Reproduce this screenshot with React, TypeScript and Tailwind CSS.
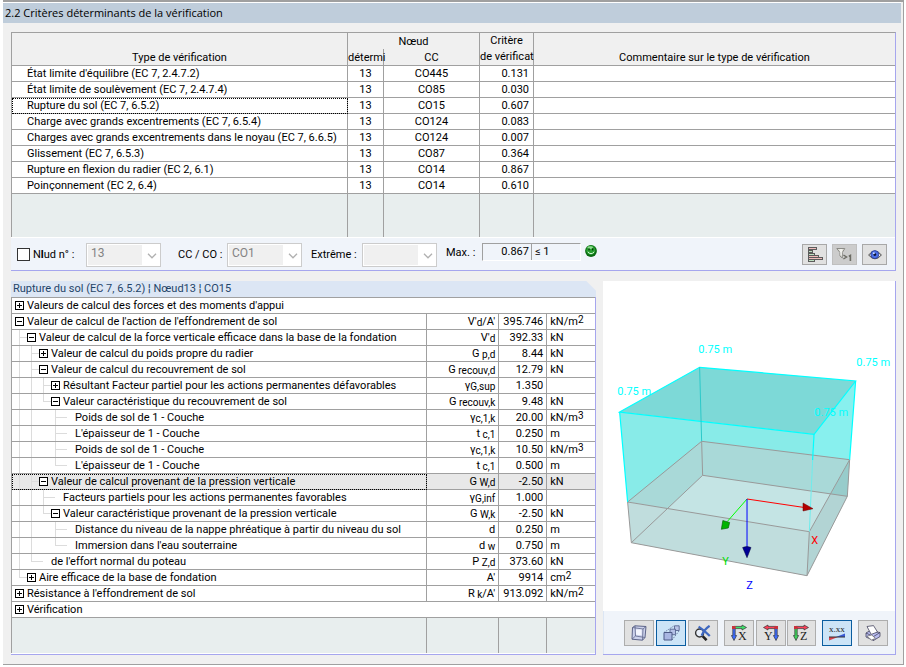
import type { ReactNode } from 'react';
import clsx from 'clsx';

const checks = [
    { label: "État limite d'équilibre (EC 7, 2.4.7.2)", node: '13', co: 'CO445', value: '0.131' },
    { label: 'État limite de soulèvement (EC 7, 2.4.7.4)', node: '13', co: 'CO85', value: '0.030' },
    { label: 'Rupture du sol (EC 7, 6.5.2)', node: '13', co: 'CO15', value: '0.607', focused: true },
    { label: 'Charge avec grands excentrements (EC 7, 6.5.4)', node: '13', co: 'CO124', value: '0.083' },
    { label: 'Charges avec grands excentrements dans le noyau (EC 7, 6.6.5)', node: '13', co: 'CO124', value: '0.007' },
    { label: 'Glissement (EC 7, 6.5.3)', node: '13', co: 'CO87', value: '0.364' },
    { label: 'Rupture en flexion du radier (EC 2, 6.1)', node: '13', co: 'CO14', value: '0.867' },
    { label: 'Poinçonnement (EC 2, 6.4)', node: '13', co: 'CO14', value: '0.610' }
];

type DetailRow = {
    // one character per indentation level: | pass through, T branch, L last branch
    guides: string;
    box?: '+' | '-';
    label: string;
    symbol?: ReactNode;
    value?: string;
    unit?: ReactNode;
    focused?: boolean;
};

const Sub = ({ children }: { children: ReactNode }) => (
    <span className="relative top-px text-[10px]">{children}</span>
);

const Sup = ({ children }: { children: ReactNode }) => (
    <span className="relative -top-[2px] text-[10px]">{children}</span>
);

const details: DetailRow[] = [
    { guides: '', box: '+', label: "Valeurs de calcul des forces et des moments d'appui" },
    { guides: '', box: '-', label: "Valeur de calcul de l'action de l'effondrement de sol", symbol: <>V'<Sub>d</Sub>/A'</>, value: '395.746', unit: <>kN/m<Sup>2</Sup></> },
    { guides: 'T', box: '-', label: 'Valeur de calcul de la force verticale efficace dans la base de la fondation', symbol: <>V'<Sub>d</Sub></>, value: '392.33', unit: 'kN' },
    { guides: '|T', box: '+', label: 'Valeur de calcul du poids propre du radier', symbol: <>G<Sub> p,d</Sub></>, value: '8.44', unit: 'kN' },
    { guides: '|T', box: '-', label: 'Valeur de calcul du recouvrement de sol', symbol: <>G<Sub> recouv,d</Sub></>, value: '12.79', unit: 'kN' },
    { guides: '||T', box: '+', label: 'Résultant Facteur partiel pour les actions permanentes défavorables', symbol: <>γ<Sub>G,sup</Sub></>, value: '1.350' },
    { guides: '||L', box: '-', label: 'Valeur caractéristique du recouvrement de sol', symbol: <>G<Sub> recouv,k</Sub></>, value: '9.48', unit: 'kN' },
    { guides: '|| T', label: 'Poids de sol de 1 - Couche', symbol: <>γ<Sub>c,1,k</Sub></>, value: '20.00', unit: <>kN/m<Sup>3</Sup></> },
    { guides: '|| T', label: "L'épaisseur de 1 - Couche", symbol: <>t<Sub> c,1</Sub></>, value: '0.250', unit: 'm' },
    { guides: '|| T', label: 'Poids de sol de 1 - Couche', symbol: <>γ<Sub>c,1,k</Sub></>, value: '10.50', unit: <>kN/m<Sup>3</Sup></> },
    { guides: '|| L', label: "L'épaisseur de 1 - Couche", symbol: <>t<Sub> c,1</Sub></>, value: '0.500', unit: 'm' },
    { guides: '|T', box: '-', label: 'Valeur de calcul provenant de la pression verticale', symbol: <>G<Sub> W,d</Sub></>, value: '-2.50', unit: 'kN', focused: true },
    { guides: '||T', label: 'Facteurs partiels pour les actions permanentes favorables', symbol: <>γ<Sub>G,inf</Sub></>, value: '1.000' },
    { guides: '||L', box: '-', label: 'Valeur caractéristique provenant de la pression verticale', symbol: <>G<Sub> W,k</Sub></>, value: '-2.50', unit: 'kN' },
    { guides: '|| T', label: 'Distance du niveau de la nappe phréatique à partir du niveau du sol', symbol: 'd', value: '0.250', unit: 'm' },
    { guides: '|| L', label: "Immersion dans l'eau souterraine", symbol: <>d<Sub> w</Sub></>, value: '0.750', unit: 'm' },
    { guides: '|L', label: "de l'effort normal du poteau", symbol: <>P<Sub> Z,d</Sub></>, value: '373.60', unit: 'kN' },
    { guides: 'L', box: '+', label: 'Aire efficace de la base de fondation', symbol: "A'", value: '9914', unit: <>cm<Sup>2</Sup></> },
    { guides: '', box: '+', label: "Résistance à l'effondrement de sol", symbol: <>R<Sub> k</Sub>/A'</>, value: '913.092', unit: <>kN/m<Sup>2</Sup></> },
    { guides: '', box: '+', label: 'Vérification' }
];

const cell = 'h-4 border-b border-[#a0a0a0] p-0 whitespace-nowrap';
const ruled = 'border-r border-[#a0a0a0]';

const ChecksTable = () => (
    <table className="w-full table-fixed border-separate border-spacing-0 border-l border-[#a0a0a0] bg-white">
        <colgroup>
            <col className="w-[336px]" />
            <col className="w-9" />
            <col className="w-24" />
            <col className="w-[54px]" />
            <col />
        </colgroup>
        <thead className="bg-[#f0f0f0]">
            <tr>
                <th rowSpan={2} className={clsx(cell, ruled, 'align-bottom font-normal')}>
                    Type de vérification
                </th>
                <th colSpan={2} className={clsx('h-4 p-0 font-normal', ruled)}>
                    Nœud
                </th>
                <th rowSpan={2} className={clsx(cell, ruled, 'align-bottom font-normal leading-4')}>
                    Critère
                    <br />
                    de vérificat
                </th>
                <th rowSpan={2} className={clsx(cell, 'align-bottom font-normal')}>
                    Commentaire sur le type de vérification
                </th>
            </tr>
            <tr>
                <th className={clsx('h-[17px] border-b p-0 font-normal', ruled)}>détermi</th>
                <th className={clsx('h-[17px] border-b p-0 font-normal', ruled)}>CC</th>
            </tr>
        </thead>
        <tbody>
            {checks.map((check) => (
                <tr key={check.label}>
                    <td
                        className={clsx(
                            cell,
                            ruled,
                            'pl-[15px]',
                            check.focused &&
                                'outline-1 -outline-offset-1 outline-black outline-dotted'
                        )}
                    >
                        {check.label}
                    </td>
                    <td className={clsx(cell, ruled, 'text-center')}>{check.node}</td>
                    <td className={clsx(cell, ruled, 'text-center')}>{check.co}</td>
                    <td className={clsx(cell, ruled, 'pr-1 text-right')}>{check.value}</td>
                    <td className={cell} />
                </tr>
            ))}
            <tr className="h-[43px] bg-[#e8eeee]">
                <td className={ruled} />
                <td className={ruled} />
                <td className={ruled} />
                <td className={ruled} />
                <td />
            </tr>
        </tbody>
    </table>
);

const Combo = ({ id, value }: { id: string; value: string }) => (
    <div className="relative h-6 w-[75px] border border-[#cccccc] bg-white p-px">
        <select
            id={id}
            disabled
            defaultValue={value}
            className="block h-5 w-[54px] appearance-none bg-[#f0f0f0] pb-1 pl-[3px] text-[12px] leading-4 text-[#838383] opacity-100"
        >
            <option>{value}</option>
        </select>
        <svg
            className="pointer-events-none absolute top-[9px] right-[3px] h-[6px] w-[10px]"
            viewBox="0 0 10 6"
            fill="none"
            stroke="#b0b0b0"
            strokeWidth="1.3"
        >
            <path d="M1 .8 5 4.8 9 .8" />
        </svg>
    </div>
);

const Smiley = () => (
    <svg className="size-3" viewBox="0 0 12 12">
        <circle cx="6" cy="6" r="5.9" fill="#0b6a12" />
        <circle cx="5.8" cy="5.2" r="4.6" fill="#27a02f" />
        <ellipse cx="5.2" cy="2.6" rx="2.8" ry="1.4" fill="#8fdc90" />
        <rect x="3.4" y="3.4" width="1.3" height="2" fill="#06330a" />
        <rect x="7" y="3.4" width="1.3" height="2" fill="#06330a" />
        <path d="M2.8 6.8Q6 10.6 9.2 6.8" fill="none" stroke="#dcf7dc" strokeWidth="1" />
    </svg>
);

const BarsIcon = () => (
    <svg className="size-4" viewBox="0 0 16 16" shapeRendering="crispEdges">
        <path d="M1 0h9v3H1zM1 3h5v3H1zM1 6h7v3H1zM1 8h11v3H1zM1 10h15v3H1zM1 12h7v3H1z" fill="#5c5c5c" />
        <path d="M2 1h7v1H2zM2 9h9v1H2zM2 11h13v1H2z" fill="#eebcbc" />
        <path d="M2 4h3v1H2zM2 7h5v1H2zM2 13h5v1H2z" fill="#bfe0c2" />
        <path d="M7 3h3v3H7z" fill="#e1e1e1" />
    </svg>
);

const FilterIcon = () => (
    <svg className="h-4 w-[17px]" viewBox="0 0 17 16">
        <path d="M.8 1.5h8L6.3 5.5v5.5L4 9V5.5z" fill="#e4e4de" stroke="#8b8b86" />
        <path d="M5 2v6.5" stroke="#fff" />
        <path d="M7.4 8 10.6 10l-3.2 2" fill="none" stroke="#6b6b64" strokeWidth="1.4" />
        <path d="M12.8 9.4l1.6-1v5.6" fill="none" stroke="#6b6b64" strokeWidth="1.6" />
    </svg>
);

const EyeIcon = () => (
    <svg className="h-3 w-[14px]" viewBox="0 0 14 12">
        <path d="M.6 6Q7-1.8 13.4 6 7 13.6.6 6z" fill="#f5f5f5" stroke="#444" strokeWidth="1" />
        <circle cx="6.8" cy="5.6" r="4" fill="#4c6fe6" stroke="#26398f" strokeWidth=".8" />
        <circle cx="6.8" cy="5.6" r="1.4" fill="#0a1030" />
        <circle cx="5.8" cy="4.2" r="1" fill="#c9dcff" />
    </svg>
);

const FilterBar = () => (
    <div className="flex h-[33px] items-start border-t border-white bg-[#f0f4fa] pr-2 pl-[6px]">
        <label className="mt-[9px] flex h-[15px] w-[59px] items-center gap-[3px] whitespace-nowrap">
            <input
                type="checkbox"
                className="m-0 size-[13px] appearance-none border border-[#333] bg-white checked:bg-[#333]"
            />
            <span>
                N<b>l</b>ud n° :
            </span>
        </label>
        <div className="ml-[10px] pt-[5px]">
            <Combo id="node" value="13" />
        </div>
        <label htmlFor="co" className="mt-[9px] ml-[17px] w-[49px] whitespace-nowrap">
            CC / CO :
        </label>
        <div className="pt-[5px]">
            <Combo id="co" value="CO1" />
        </div>
        <label htmlFor="extreme" className="mt-[9px] ml-[9px] w-[51px] whitespace-nowrap">
            Extrême :
        </label>
        <div className="pt-[5px]">
            <Combo id="extreme" value="" />
        </div>
        <span className="mt-[7px] ml-[9px] w-9 whitespace-nowrap">Max. :</span>
        <div className="mt-[5px] flex h-[18px] w-[99px] border border-t-[#a0a0a0] border-r-white border-b-white border-l-[#a0a0a0] leading-4">
            <span className="w-[49px] border-r border-[#a0a0a0] pr-[2px] text-right">0.867</span>
            <span className="pl-[3px]">≤ 1</span>
        </div>
        <div className="mt-[7px] ml-1">
            <Smiley />
        </div>
        <div className="mt-[6px] ml-auto flex gap-[5px]">
            <button type="button" aria-label="Diagramme" className="grid h-[21px] w-[25px] place-items-center border border-[#a8a8a8] bg-[#e1e1e1]">
                <BarsIcon />
            </button>
            <button type="button" aria-label="Filtrer" disabled className="grid h-[21px] w-[25px] place-items-center border border-[#bfbfbf] bg-[#cccccc]">
                <FilterIcon />
            </button>
            <button type="button" aria-label="Afficher" className="grid h-[21px] w-[25px] place-items-center border border-[#a8a8a8] bg-[#e1e1e1]">
                <EyeIcon />
            </button>
        </div>
    </div>
);

const Guide = ({ kind }: { kind: string }) => (
    <span className="flex h-[15px] w-3 shrink-0 pl-[7px]">
        {kind !== ' ' && (
            <span className={clsx('w-px bg-[#dcdcdc]', kind === 'L' ? 'h-2' : 'h-[15px]')} />
        )}
        {(kind === 'T' || kind === 'L') && <span className="mt-[7px] h-px w-1 bg-[#dcdcdc]" />}
    </span>
);

const TreeLabel = ({ row }: { row: DetailRow }) => (
    <div className="flex h-[15px] items-center">
        {[...row.guides].map((kind, i) => (
            <Guide key={i} kind={kind} />
        ))}
        <span className="mr-[3px] flex w-3 shrink-0 items-center">
            {row.box ? (
                <>
                    <span className={clsx('h-px w-[3px]', row.guides && 'bg-[#dcdcdc]')} />
                    <button
                        type="button"
                        aria-expanded={row.box === '-'}
                        aria-label={row.label}
                        className="block size-[9px]"
                    >
                        <svg className="block size-[9px]" viewBox="0 0 9 9" shapeRendering="crispEdges">
                            <path d="M.5.5h8v8h-8z" fill="#fff" stroke="#000" />
                            <path d={row.box === '+' ? 'M2 4.5h5M4.5 2v5' : 'M2 4.5h5'} stroke="#000" />
                        </svg>
                    </button>
                </>
            ) : (
                <span className="h-px w-[7px] bg-[#dcdcdc]" />
            )}
        </span>
        <span>{row.label}</span>
    </div>
);

const DetailsPanel = () => (
    <section className="flex min-w-0 flex-col border-b border-[#a6a6ee]">
        <h2 className="h-4 bg-[#dce6f4] pl-[2px] leading-4 text-[#1f4468] [clip-path:polygon(0_0,calc(100%-10px)_0,100%_10px,100%_100%,0_100%)]">
            Rupture du sol (EC 7, 6.5.2) ¦ Nœud13 ¦ CO15
        </h2>
        <div className="border-r border-[#a6a6ee] bg-white pb-px">
            <table className="w-full table-fixed border-separate border-spacing-0 border-t border-l border-[#a0a0a0]">
                <colgroup>
                    <col />
                    <col className="w-[72px]" />
                    <col className="w-12" />
                    <col className="w-12" />
                </colgroup>
                <tbody>
                    {details.map((row, i) =>
                        row.symbol ? (
                            <tr key={i} className={row.focused ? 'bg-[#e8e8e8]' : undefined}>
                                <td
                                    className={clsx(
                                        cell,
                                        ruled,
                                        row.focused &&
                                            'outline-1 -outline-offset-1 outline-black outline-dotted'
                                    )}
                                >
                                    <TreeLabel row={row} />
                                </td>
                                <td className={clsx(cell, ruled, 'pr-[3px] text-right')}>
                                    <div className="h-[15px]">{row.symbol}</div>
                                </td>
                                <td className={clsx(cell, ruled, 'pr-[3px] text-right')}>{row.value}</td>
                                <td className={clsx(cell, 'pl-[3px]')}>
                                    <div className="h-[15px]">{row.unit}</div>
                                </td>
                            </tr>
                        ) : (
                            <tr key={i}>
                                <td colSpan={4} className={cell}>
                                    <TreeLabel row={row} />
                                </td>
                            </tr>
                        )
                    )}
                    <tr className="h-[35px] bg-[#e8eeee]">
                        <td className={ruled} />
                        <td className={ruled} />
                        <td className={ruled} />
                        <td />
                    </tr>
                </tbody>
            </table>
        </div>
    </section>
);

// Footing block with the soil cover above it, in perspective
const Scene = () => (
    <svg className="block h-[330px] w-full bg-white" viewBox="603 281 291 330">
        <path d="M619.3 412 813.7 434.3 809 531.7 627.3 502z" fill="#88ebe8" />
        <path d="M813.7 434.3 855.3 381 849.3 459.7 809 531.7z" fill="#88f0ee" />
        <path d="M619.3 412 699.3 367.3 855.3 381 813.7 434.3z" fill="#7dd9d7" />
        <path d="M627.3 502 701.3 441.3 849.3 459.7 809 531.7z" fill="#a9d9d8" />
        <path d="M631 542.7 702.3 475.3 847 496.3 806.7 575.7z" fill="#c4e4e4" />
        <path d="M627.3 502 809 531.7 806.7 575.7 631 542.7z" fill="#c0dddd" />
        <path d="M809 531.7 849.3 459.7 847 496.3 806.7 575.7z" fill="#b2d4d4" />
        <path d="M849.3 459.7 847 496.3 830.5 494z" fill="#97cccb" />
        <g fill="none" stroke="#999" strokeWidth="1">
            <path d="M627.3 502 701.3 441.3 849.3 459.7 809 531.7z" />
            <path d="M631 542.7 702.3 475.3 847 496.3 806.7 575.7z" />
            <path d="M627.3 502 631 542.7M701.3 441.3 702.3 475.3M849.3 459.7 847 496.3M809 531.7 806.7 575.7" />
        </g>
        <g fill="none" stroke="#00ffff" strokeWidth="1.2">
            <path d="M619.3 412 699.3 367.3 855.3 381 813.7 434.3z" />
            <path d="M619.3 412 627.3 502M855.3 381 849.3 459.7" />
            <path d="M813.7 434.3 812.3 460" />
        </g>
        <path d="M699.3 367.3 701.3 441.3" stroke="#2cc9c9" />
        <path d="M812.3 460 809 531.7" stroke="#6eecec" />
        <path d="M746.7 499 804 507.5" stroke="#ff0000" />
        <path d="M802.7 503 812.7 508.7 802.7 511z" fill="#b40000" stroke="#600" strokeWidth=".5" />
        <path d="M746.7 499 727 521.5" stroke="#00ff00" />
        <path d="M722.5 520.5 729.3 522.5 728 528 721 529.3z" fill="#00b400" stroke="#050" strokeWidth=".6" />
        <path d="M746.7 499v49" stroke="#0000ff" />
        <path d="M742.3 547.5Q746.7 545.5 750.7 547.5L746.7 557.7z" fill="#000096" stroke="#003" strokeWidth=".5" />
        <g fill="#00ffff" fontSize="11">
            <text x="698" y="353">0.75 m</text>
            <text x="856" y="366">0.75 m</text>
            <text x="617" y="395">0.75 m</text>
            <text x="814" y="416">0.75 m</text>
        </g>
        <g fontSize="11">
            <text x="811" y="544" fill="#ff0000">X</text>
            <text x="722" y="565" fill="#00dd00">Y</text>
            <text x="746" y="589" fill="#0000ff">Z</text>
        </g>
    </svg>
);

const ToolButton = ({
    active,
    children,
    className,
    label
}: {
    active?: boolean;
    children: ReactNode;
    className?: string;
    label: string;
}) => (
    <button
        type="button"
        aria-label={label}
        aria-pressed={active}
        className={clsx(
            'grid h-[26px] w-[30px] place-items-center border',
            active ? 'border-[#0a5da0] bg-[#cce4f7]' : 'border-[#adadad] bg-[#e1e1e1]',
            className
        )}
    >
        {children}
    </button>
);

// Two coloured axis arrows with the name of the view axis
const AxisIcon = ({
    axis,
    across,
    down,
    flip
}: {
    axis: string;
    across: string;
    down: string;
    flip?: boolean;
}) => (
    <svg className="h-[18px] w-4" viewBox="0 0 16 18">
        <g transform={flip ? 'matrix(-1 0 0 1 16 0)' : undefined}>
            <path d="M3 2.4h8V1l4.5 2.5L11 6V4.6H3z" fill={across} stroke="#333" strokeWidth=".7" />
            <path d="M1.8 4h2.4v7.5h1.4L3 16.5.4 11.5h1.4z" fill={down} stroke="#333" strokeWidth=".7" />
            <rect x="1" y="2" width="3.6" height="3" fill="#c8323c" />
        </g>
        <text
            x={flip ? 1 : 7}
            y="16"
            fontSize="12"
            fill="#222"
            fontFamily="'Liberation Serif', serif"
        >
            {axis}
        </text>
    </svg>
);

const ViewBar = () => (
    <div className="flex h-[43px] items-start justify-end border-l border-[#dce6f4] bg-[#f0f4fa] pt-[9px] pr-[7px] pl-5">
        <ToolButton label="Vue isométrique">
            <svg className="size-4" viewBox="0 0 16 16" fill="none" stroke="#5d6488">
                <path d="M1.5 2.5 4 .8l11 .7-1 11-2.5 2.7-10.5-1z" fill="#ccd2ec" />
                <path d="M1.5 2.5 12 4l-.5 11.2M12 4l3-2.5M4 .8 4.5 11l9.5 1.5M4.5 11 1 14.2" strokeWidth=".8" />
                <path d="M5 4.6h5.6v5.6L5 9.8z" fill="#f3f5fd" stroke="none" />
            </svg>
        </ToolButton>
        <ToolButton label="Perspective" active className="ml-[2px] w-[29px]">
            <svg className="h-4 w-[17px]" viewBox="0 0 17 16" stroke="#4d5a86">
                <path d="M1 7.5 11 .8M9 15l7-9M9 7.5l7-6.7" strokeWidth=".7" strokeDasharray="1.5 1" />
                <path d="M11.5 .8h4.7v4.7h-4.7z" fill="#b9c4e8" strokeWidth=".8" />
                <path d="M7 4.2h5.5v5.5H7z" fill="#b4c0e6" strokeWidth=".8" />
                <path d="M1 7.5h8V15H1z" fill="#a9b6e2" />
            </svg>
        </ToolButton>
        <ToolButton label="Zoom tout" className="ml-[2px]">
            <svg className="h-4 w-[17px]" viewBox="0 0 17 16" fill="none">
                <circle cx="5.6" cy="8" r="4" fill="#e8eef8" stroke="#333" strokeWidth="1.4" />
                <path d="m8.6 11.2 4 4" stroke="#222" strokeWidth="2.6" />
                <path d="M4.6 1.6Q10 5 15.8 11M15.6.8Q10 4.6 7.6 10.6" stroke="#3f68c0" strokeWidth="2.2" />
            </svg>
        </ToolButton>
        <ToolButton label="Vue en X" className="ml-[6px]">
            <AxisIcon axis="X" across="#3fe06a" down="#3c6cff" />
        </ToolButton>
        <ToolButton label="Vue en Y" className="ml-[2px]">
            <AxisIcon axis="Y" across="#ff4058" down="#3c6cff" flip />
        </ToolButton>
        <ToolButton label="Vue en Z" className="ml-px">
            <AxisIcon axis="Z" across="#ff4058" down="#3fd05a" />
        </ToolButton>
        <ToolButton label="Afficher les valeurs" active className="ml-[6px]">
            <svg className="h-4 w-[18px]" viewBox="0 0 18 16">
                <text x="1" y="7" fontSize="9" fill="#222" fontFamily="'Liberation Serif', serif">
                    x.xx
                </text>
                <path d="M8 12 17 8.5V12z" fill="#3b5bd6" />
                <path d="M1 12v3.5L10 12z" fill="#d8434b" />
                <path d="M1 12h16" stroke="#333" strokeWidth="1" />
            </svg>
        </ToolButton>
        <ToolButton label="Imprimer" className="ml-[6px]">
            <svg className="size-4" viewBox="0 0 16 16" stroke="#44445e" strokeWidth=".8">
                <path d="M1 8 4.5 6 15 7.5v4L8.5 15.5 1 12z" fill="#b9bcf0" />
                <path d="M1 8l7.5 3.6L15 7.5M8.5 11.6v3.9" fill="none" />
                <path d="M2 1.5 8.5.6 12.5 7 6.2 9.4z" fill="#fff" />
                <path d="M2 11.2 6.5 15l4-1.6-3.8-3.4z" fill="#fff" stroke="#777" />
            </svg>
        </ToolButton>
    </div>
);

const App = () => (
    <div className="min-h-screen bg-white pr-[2px] pb-[2px] pl-[3px] font-[Roboto,'Liberation_Sans',sans-serif] text-[11px] leading-[15px] text-black">
        <main className="border-t-2 border-r border-b border-[#a0a0a0] bg-[#f0f0f0] pr-[2px] pb-[9px]">
            <h1 className="h-[21px] border-t border-white bg-[#bfcddb] pl-[2px] font-['Open_Sans','Noto_Sans',sans-serif] text-[11px] leading-5">
                2.2 Critères déterminants de la vérification
            </h1>
            <div className="flex flex-col gap-[10px] pt-[9px] pr-[5px] pl-2">
                <section className="border-t border-t-[#a0a0a0] border-r border-r-[#a6a6ee] border-b border-b-[#a6a6ee]">
                    <ChecksTable />
                    <FilterBar />
                </section>
                <div className="grid grid-cols-[2fr_1fr] gap-[7px]">
                    <DetailsPanel />
                    <section className="min-w-0 border-r border-b border-[#a6a6ee]">
                        <Scene />
                        <ViewBar />
                    </section>
                </div>
            </div>
        </main>
    </div>
);

export default App;
